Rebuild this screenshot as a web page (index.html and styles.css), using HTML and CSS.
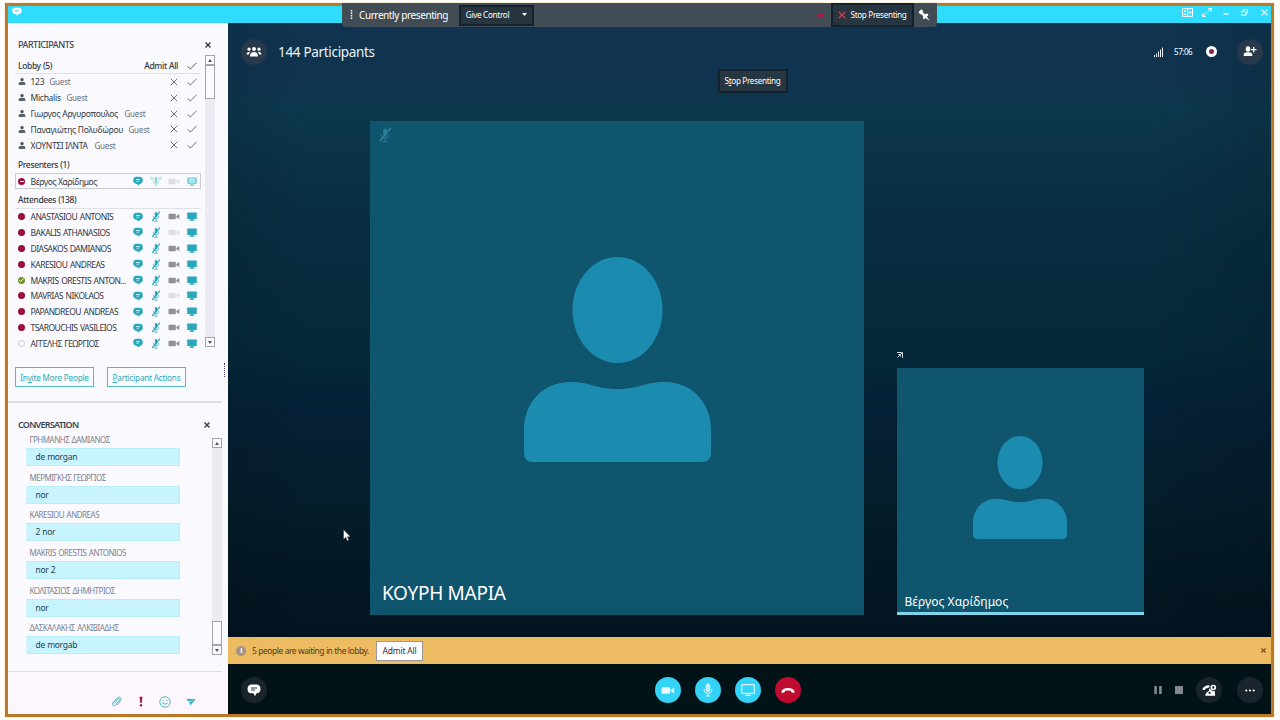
FILE: index.html
```html
<!DOCTYPE html>
<html lang="en">
<head>
<meta charset="utf-8">
<title>Meeting</title>
<link rel="stylesheet" href="styles.css">
</head>
<body>
<svg class="defs" width="0" height="0">
  <symbol id="person" viewBox="0 0 187 205"><ellipse cx="93.500" cy="53" rx="45" ry="53"/><path d="M0 172C0 148 17 125 47 125C66 125 72 132 93.500 132S121 125 140 125C170 125 187 148 187 172V196Q187 205 178 205H9Q0 205 0 196Z"/></symbol>
  <symbol id="user" viewBox="0 0 8 9"><ellipse cx="4" cy="2.600" rx="1.700" ry="1.900"/><path d="M.7 8V6.400Q.7 5 2.500 5H5.500Q7.300 5 7.300 6.400V8Z"/></symbol>
  <symbol id="x" viewBox="0 0 8 8"><path d="M.7.7L7.300 7.300M7.300.7L.7 7.300" fill="none" stroke="currentColor"/></symbol>
  <symbol id="check" viewBox="0 0 10 8"><path d="M.6 4.500L3.500 7L9.400.8" fill="none" stroke="currentColor"/></symbol>
  <symbol id="chat" viewBox="0 0 10 10"><path d="M3.500 .8H6.500Q9.800 1 9.800 4.300T6.800 7.900L5.600 9.500L4 7.900Q.2 7.500.2 4.300T3.500 .8Z" fill="currentColor"/><path d="M3 3.500H7M3.300 5.200H6" stroke="#d8f5f8" stroke-width=".8"/></symbol>
  <symbol id="mute" viewBox="0 0 10 11"><rect x="3.800" y=".9" width="2.400" height="5.600" rx="1.200" fill="currentColor"/><path d="M2.400 5V6Q2.700 7.800 5 7.800T7.600 6V5M5 8V10M3.200 10.200H6.800" fill="none" stroke="currentColor" stroke-width=".7"/><path d="M1.200 10L9 .6" stroke="currentColor" stroke-width="1.200"/></symbol>
  <symbol id="live" viewBox="0 0 12 11"><rect x="4.900" y="1" width="2.200" height="6" rx="1.100" fill="currentColor"/><path d="M3.500 5V6.500Q4 8 6 8T8.500 6.500V5M6 8V10.500M2.900 1V4M9.100 1V4M1 .8V3.700M11 .8V3.700" fill="none" stroke="currentColor" stroke-width=".8"/></symbol>
  <symbol id="cam" viewBox="0 0 12 7"><rect x=".5" y=".8" width="7.300" height="5.500" rx="1" fill="currentColor"/><path d="M8.300 3L11.300 1V6L8.300 4.200Z" fill="currentColor"/></symbol>
  <symbol id="screen" viewBox="0 0 10 9"><path d="M.2.5H9.800V7H6.500V8H7.500V8.700H2.500V8H3.500V7H.2Z" fill="currentColor"/></symbol>
</svg>

<div class="window">
  <header class="titlebar">
    <svg class="logo" width="10" height="10" viewBox="0 0 10 10"><path d="M2.500.8H7.500Q9.700 1 9.700 3.800T7.500 7H6.500L5 9L4.200 7H2.500Q.3 6.700.3 3.800T2.500.8Z" fill="#fff"/><path d="M3 3.300H7M3 4.700H6" stroke="#37d5ef" stroke-width=".7"/></svg>
    <div class="winctl">
      <svg width="11" height="9" viewBox="0 0 11 9" fill="none" stroke="#fff"><path d="M.5.6H10.500V8.400H.5ZM5.700.6V8.400M7 4.500H9.500M8.200 3V6"/><circle cx="3" cy="3.200" r=".7"/><path d="M1.600 6.300H4.500"/></svg>
      <svg width="10" height="9" viewBox="0 0 10 9" fill="none" stroke="#fff"><path d="M6 .6H9.400V3.700M9.200.8L5.700 4M4 8.400H.6V5.200M.8 8.200L4.300 5"/></svg>
      <svg width="6" height="9" viewBox="0 0 6 9"><path d="M.5 6H5.500" stroke="#fff" stroke-width="1.300"/></svg>
      <svg width="7" height="9" viewBox="0 0 7 9" fill="none" stroke="#fff"><path d="M2 3V1.500H6.500V5H5M.5 3.500H5V7.200H.5Z"/></svg>
      <svg width="7" height="7" viewBox="0 0 8 8" color="#fff" stroke-width="1.400"><use href="#x"/></svg>
    </div>
  </header>

  <div class="content">
    <aside class="sidebar">
      <section class="people">
        <div class="panel-head"><h2>PARTICIPANTS</h2><svg class="close" width="6" height="6" stroke-width="2"><use href="#x"/></svg></div>
        <div class="scroller">
          <div class="list">
            <div class="group lobby"><span>Lobby (5)</span><span class="admit">Admit All</span><svg width="10" height="8"><use href="#check"/></svg></div>
            <div class="guest"><svg class="u" width="8" height="9"><use href="#user"/></svg><span style="width:12px">123</span><i>Guest</i><svg class="no" width="8" height="8"><use href="#x"/></svg><svg class="ok" width="10" height="8"><use href="#check"/></svg></div>
            <div class="guest"><svg class="u" width="8" height="9"><use href="#user"/></svg><span style="width:29px">Michalis</span><i>Guest</i><svg class="no" width="8" height="8"><use href="#x"/></svg><svg class="ok" width="10" height="8"><use href="#check"/></svg></div>
            <div class="guest"><svg class="u" width="8" height="9"><use href="#user"/></svg><span style="width:87px">Γιωργος Αργυροπουλος</span><i>Guest</i><svg class="no" width="8" height="8"><use href="#x"/></svg><svg class="ok" width="10" height="8"><use href="#check"/></svg></div>
            <div class="guest"><svg class="u" width="8" height="9"><use href="#user"/></svg><span style="width:91px">Παναγιώτης Πολυδώρου</span><i>Guest</i><svg class="no" width="8" height="8"><use href="#x"/></svg><svg class="ok" width="10" height="8"><use href="#check"/></svg></div>
            <div class="guest"><svg class="u" width="8" height="9"><use href="#user"/></svg><span class="caps" style="width:57px">ΧΟΥΝΤΣΙ ΙΛΝΤΑ</span><i>Guest</i><svg class="no" width="8" height="8"><use href="#x"/></svg><svg class="ok" width="10" height="8"><use href="#check"/></svg></div>
            <div class="group presenters">Presenters (1)</div>
            <div class="row self"><b class="dot busy-line"></b><span class="name mixed">Βέργος Χαρίδημος</span><svg width="10" height="10"><use href="#chat"/></svg><svg class="pale" width="12" height="11"><use href="#live"/></svg><svg class="cam off" width="12" height="7"><use href="#cam"/></svg><svg class="pale" width="10" height="9"><use href="#screen"/><path d="M3 2.500H7V5H3Z" fill="none" stroke="#fff" stroke-width=".8"/></svg></div>
            <div class="group attendees">Attendees (138)</div>
            <div class="row"><b class="dot"></b><span class="name">ANASTASIOU ANTONIS</span><svg width="10" height="10"><use href="#chat"/></svg><svg width="12" height="11"><use href="#mute"/></svg><svg class="cam" width="12" height="7"><use href="#cam"/></svg><svg width="10" height="9"><use href="#screen"/></svg></div>
            <div class="row"><b class="dot"></b><span class="name">BAKALIS ATHANASIOS</span><svg width="10" height="10"><use href="#chat"/></svg><svg width="12" height="11"><use href="#mute"/></svg><svg class="cam off" width="12" height="7"><use href="#cam"/></svg><svg width="10" height="9"><use href="#screen"/></svg></div>
            <div class="row"><b class="dot"></b><span class="name">DIASAKOS DAMIANOS</span><svg width="10" height="10"><use href="#chat"/></svg><svg width="12" height="11"><use href="#mute"/></svg><svg class="cam" width="12" height="7"><use href="#cam"/></svg><svg width="10" height="9"><use href="#screen"/></svg></div>
            <div class="row"><b class="dot"></b><span class="name">KARESIOU ANDREAS</span><svg width="10" height="10"><use href="#chat"/></svg><svg width="12" height="11"><use href="#mute"/></svg><svg class="cam" width="12" height="7"><use href="#cam"/></svg><svg width="10" height="9"><use href="#screen"/></svg></div>
            <div class="row"><b class="dot free"><svg width="5" height="4" viewBox="0 0 10 8" stroke-width="2"><use href="#check"/></svg></b><span class="name">MAKRIS ORESTIS ANTON...</span><svg width="10" height="10"><use href="#chat"/></svg><svg width="12" height="11"><use href="#mute"/></svg><svg class="cam" width="12" height="7"><use href="#cam"/></svg><svg width="10" height="9"><use href="#screen"/></svg></div>
            <div class="row"><b class="dot"></b><span class="name">MAVRIAS NIKOLAOS</span><svg width="10" height="10"><use href="#chat"/></svg><svg width="12" height="11"><use href="#mute"/></svg><svg class="cam off" width="12" height="7"><use href="#cam"/></svg><svg width="10" height="9"><use href="#screen"/></svg></div>
            <div class="row"><b class="dot"></b><span class="name">PAPANDREOU ANDREAS</span><svg width="10" height="10"><use href="#chat"/></svg><svg width="12" height="11"><use href="#mute"/></svg><svg class="cam" width="12" height="7"><use href="#cam"/></svg><svg width="10" height="9"><use href="#screen"/></svg></div>
            <div class="row"><b class="dot"></b><span class="name">TSAROUCHIS VASILEIOS</span><svg width="10" height="10"><use href="#chat"/></svg><svg width="12" height="11"><use href="#mute"/></svg><svg class="cam" width="12" height="7"><use href="#cam"/></svg><svg width="10" height="9"><use href="#screen"/></svg></div>
            <div class="row"><b class="dot none"></b><span class="name">ΑΓΓΕΛΗΣ ΓΕΩΡΓΙΟΣ</span><svg width="10" height="10"><use href="#chat"/></svg><svg width="12" height="11"><use href="#mute"/></svg><svg class="cam" width="12" height="7"><use href="#cam"/></svg><svg width="10" height="9"><use href="#screen"/></svg></div>
          </div>
          <div class="scrollbar"><div class="sb up"></div><div class="thumb tall"></div><div class="sb down"></div></div>
        </div>
        <div class="actions"><button>In<u>v</u>ite More People</button><button><u>P</u>articipant Actions</button></div>
        <div class="grip"></div>
      </section>

      <section class="conversation">
        <div class="panel-head"><h2 class="strong">CONVERSATION</h2><svg class="close" width="6" height="6" stroke-width="2"><use href="#x"/></svg></div>
        <div class="chat-body">
          <div class="messages">
            <div class="msg"><h3>ΓΡΗΜΑΝΗΣ ΔΑΜΙΑΝΟΣ</h3><p>de morgan</p></div>
            <div class="msg"><h3>ΜΕΡΜΙΓΚΗΣ ΓΕΩΡΓΙΟΣ</h3><p>nor</p></div>
            <div class="msg"><h3>KARESIOU ANDREAS</h3><p>2 nor</p></div>
            <div class="msg"><h3>MAKRIS ORESTIS ANTONIOS</h3><p>nor 2</p></div>
            <div class="msg"><h3>ΚΟΛΙΤΑΣΙΟΣ ΔΗΜΗΤΡΙΟΣ</h3><p>nor</p></div>
            <div class="msg"><h3>ΔΑΣΚΑΛΑΚΗΣ ΑΛΚΙΒΙΑΔΗΣ</h3><p>de morgab</p></div>
          </div>
          <div class="scrollbar"><div class="sb up"></div><div class="track"></div><div class="thumb"></div><div class="sb down"></div></div>
        </div>
      </section>

      <div class="compose">
        <svg width="11" height="12" viewBox="0 0 11 12" fill="none" stroke="#4fb9c6"><path d="M3 7.500L6.800 3.200Q7.800 2.400 8.300 3T8.300 4.700L4.300 9.200Q3 10.300 2 9.500T1.800 7L6 2.200Q7.800.3 9.300 1.500T9.500 4.800L6 9"/></svg>
        <svg width="4" height="11" viewBox="0 0 4 11" fill="#a01845"><path d="M.5.800H3.500L2.700 7H1.300Z"/><circle cx="2" cy="9.200" r="1.200"/></svg>
        <svg width="12" height="12" viewBox="0 0 12 12" fill="none" stroke="#4fb9c6"><circle cx="6" cy="6" r="5.200"/><path d="M4.200 4V5.200M7.800 4V5.200M3.300 6.800Q6 9.800 8.700 6.800"/></svg>
        <svg width="10" height="8" viewBox="0 0 10 8" fill="#37b3c2"><path d="M.2.800L9.800 1.200L4.200 7.500L3.300 4.600L7.500 2L2.500 3.800Z"/></svg>
      </div>
    </aside>

    <main class="main">
      <div class="stage">
        <div class="stage-head">
          <span class="round"><svg width="16" height="12" viewBox="0 0 16 12" fill="#fff"><circle cx="8" cy="3" r="2"/><circle cx="3" cy="3.200" r="1.600"/><circle cx="13" cy="3.200" r="1.600"/><path d="M4 10.500Q4 6 8 6T12 10.500ZM.5 8.500Q.5 5.500 4.500 5.700Q3 7 3 8.500ZM15.500 8.500Q15.500 5.500 11.500 5.700Q13 7 13 8.500Z"/></svg></span>
          <h1>144 Participants</h1>
          <svg class="signal" width="10" height="10" viewBox="0 0 10 10" fill="#e6eef2"><path d="M0 8H1V10H0ZM2 6.500H3V10H2ZM4 4.500H5V10H4ZM6 2.500H7V10H6ZM8 .5H9V10H8Z"/></svg>
          <span class="time">57:06</span>
          <span class="rec"></span>
          <span class="round"><svg width="14" height="11" viewBox="0 0 14 11" fill="#fff"><ellipse cx="5" cy="3" rx="2.300" ry="2.800"/><path d="M.7 10V8.500Q1 6.300 4 6.300H6Q9 6.300 9.300 8.500V10ZM10 1H11.300V3H13.500V4.300H11.300V6.500H10V4.300H8V3H10Z"/></svg></span>
        </div>
        <div class="stop-row"><button class="dark">S<u>t</u>op Presenting</button></div>
        <div class="tiles">
          <div class="tile big"><svg class="muted" width="14" height="16" viewBox="0 0 10 11"><use href="#mute"/></svg><svg class="avatar" width="187" height="205"><use href="#person"/></svg><span>ΚΟΥΡΗ ΜΑΡΙΑ</span></div>
          <div class="side">
            <svg class="pop" width="6" height="6" viewBox="0 0 6 6" fill="none" stroke="#c8d8dc"><path d="M0 .5H5.500V6M5 1L.5 5.500M1.500 2.500H3.500V4.500"/></svg>
            <div class="tile small"><svg class="avatar" width="94" height="103" viewBox="0 0 187 205"><use href="#person"/></svg><span>Βέργος Χαρίδημος</span></div>
          </div>
        </div>
      </div>
      <div class="notice"><b class="info">i</b><span>5 people are waiting in the lobby.</span><button>Admit All</button><svg class="nclose" width="5" height="5" viewBox="0 0 8 8" stroke-width="2"><use href="#x"/></svg></div>
      <footer class="controls">
        <div class="left"><span class="round"><svg width="14" height="13" viewBox="0 0 14 13"><path d="M4 .5H10Q13.500 1 13.500 5T10 9.300H9.500L8 12.300L6.500 9.300H4Q.5 9 .5 5T4 .5Z" fill="#fff"/><path d="M4 4H10M4 6H8" stroke="#26333d"/></svg></span></div>
        <div class="calls">
          <span class="ball"><svg width="14" height="9" viewBox="0 0 12 7" color="#e9fbff"><use href="#cam"/></svg></span>
          <span class="ball"><svg width="10" height="14" viewBox="0 0 10 14" fill="none" stroke="#e9fbff"><rect x="3.300" y="1" width="3.400" height="7.500" rx="1.700" fill="#b5eefa"/><path d="M1.300 6V7.500Q1.700 10.500 5 10.500T8.700 7.500V6M5 10.500V13M2.800 13H7.200"/></svg></span>
          <span class="ball"><svg width="14" height="12" viewBox="0 0 14 12" fill="none" stroke="#d9f9ff" stroke-width="1.200"><rect x=".7" y=".7" width="12.600" height="8.600" rx=".6"/><path d="M4 11.300H10M7 9.500V11"/></svg></span>
          <span class="ball hang"><svg width="14" height="7" viewBox="0 0 14 7" fill="#fff"><path d="M.5 4.300Q2 1 7 1T13.500 4.300Q13.700 6 12.700 5.900L10.500 5.200Q10 4.800 9.800 3.800Q7 3 4.200 3.800Q4 4.800 3.500 5.200L1.300 5.900Q.3 6 .5 4.300Z"/></svg></span>
        </div>
        <div class="right">
          <svg width="8" height="8" viewBox="0 0 8 8" fill="#84898f"><path d="M.3 0H2.900V8H.3ZM5.100 0H7.700V8H5.100Z"/></svg>
          <span class="stop"></span>
          <span class="round"><svg width="15" height="13" viewBox="0 0 15 13"><path d="M.6 4.800Q2.500 1 7.300 1.200L7.600 3L5.500 4.300L4 4.300L2.700 5.900L.8 5.900ZM7 4.800L8.500 5Q9 7.200 12.800 7.200L13.200 11.700H3.300Q3 9 7 7Z" fill="#fff"/><circle cx="11.300" cy="3.500" r="2" fill="none" stroke="#fff" stroke-width="1.600"/><circle cx="7.600" cy="8.900" r="1.100" fill="#1b252d"/></svg></span>
          <span class="round"><svg width="10" height="3" viewBox="0 0 10 3" fill="#fff"><circle cx="1.300" cy="1.500" r="1.100"/><circle cx="5" cy="1.500" r="1.100"/><circle cx="8.700" cy="1.500" r="1.100"/></svg></span>
        </div>
      </footer>
    </main>
  </div>
</div>

<div class="share">
  <svg width="3" height="10" viewBox="0 0 3 10"><path d="M1.500 0V10" stroke="#fff" stroke-width="1.500" stroke-dasharray="1.500 1"/></svg>
  <span class="status">Currently presenting</span>
  <button class="dark give">Give Control<svg width="5" height="3" viewBox="0 0 5 3"><path d="M0 0H5L2.500 3Z" fill="#fff"/></svg></button>
  <span class="reddot"></span>
  <button class="dark end"><svg width="8" height="8" viewBox="0 0 8 8" color="#d83a49" stroke-width="1.300"><use href="#x"/></svg>Stop Presenting</button>
  <svg class="pin" width="12" height="12" viewBox="0 0 11 11"><path d="M.5 2.800L3 .3L4.700 1.800L4.400 3L6.500 4.800L8.800 4.200L9.500 5.700L8.200 7L10.700 10.700L7 8.200L5.800 9.500L4.500 8.700L4.800 6.700L3.100 4.800L2 4.900Z" fill="#fff"/></svg>
</div>
<svg class="cursor" width="8" height="13" viewBox="0 0 8 13"><path d="M.6.800V10.300L2.800 8.300L4.300 11.800L5.800 11.100L4.400 7.800H7.400Z" fill="#fff" stroke="#334" stroke-width=".4"/></svg>
</body>
</html>
```

FILE: styles.css
```css
* { box-sizing: border-box; }
body { margin: 0; width: 1280px; height: 720px; overflow: hidden; position: relative; background: #fffefa; padding: 3px 0 0 5px; font-family: "Noto Sans", "Open Sans", sans-serif; color: #333a43; }
h1, h2, h3, p { margin: 0; font-weight: 400; }
button { font: inherit; margin: 0; padding: 0; display: flex; align-items: center; justify-content: center; white-space: pre; }
svg { display: block; flex: none; }
.defs { position: absolute; }
u { text-underline-offset: 1px; text-decoration-thickness: 1px; }

.window { width: 1269px; height: 714px; border: 3px solid #bb7a29; box-shadow: 0 0 1px #e6a55a; display: flex; flex-direction: column; }
.titlebar { height: 17px; background: #2fdcfd; display: flex; justify-content: space-between; padding: 1px 3px 0 4px; align-items: flex-start; }
.winctl { display: flex; align-items: center; padding-top: 1px; }
.winctl svg:nth-child(1) { margin-right: 9px; }
.winctl svg:nth-child(2) { margin-right: 11px; }
.winctl svg:nth-child(3) { margin-right: 12px; }
.winctl svg:nth-child(4) { margin-right: 13px; }
.content { display: flex; flex: 1; min-height: 0; }

.sidebar { width: 220px; background: #f9f9fe; display: flex; flex-direction: column; white-space: nowrap; }
.people { height: 380px; border-bottom: 2px solid #dcdee0; margin-right: 6px; position: relative; }
.panel-head { display: flex; justify-content: space-between; align-items: center; }
.people .panel-head { height: 32px; padding: 11px 11px 0 10px; }
h2 { font-size: 9px; letter-spacing: -.5px; line-height: 12px; color: #3f4650; font-weight: 500; }
h2.strong { font-weight: 600; letter-spacing: -.75px; }
.close { color: #3d434b; }
.scroller { display: flex; height: 293px; }
.list { width: 197px; padding-left: 7px; font-size: 8.500px; letter-spacing: -.28px; }
.group { line-height: 14px; padding-left: 3px; font-weight: 500; letter-spacing: -.37px; word-spacing: .3px; }
.lobby { height: 19px; padding-top: 3px; border-bottom: 1px solid #dfe1e6; display: flex; align-items: center; margin-right: 4px; padding-right: 4px; }
.lobby .admit { margin-left: auto; margin-right: 9px; }
.lobby svg { color: #555c64; }
.guest, .row { height: 15.850px; display: flex; align-items: center; }
.guest { padding-right: 8px; color: #6a7078; }
.guest .u { margin-left: 3px; margin-right: 4.500px; fill: #59616a; }
.guest span { color: #333a43; }
.guest .caps { letter-spacing: -.35px; }
.guest i { font-style: normal; font-size: 8px; margin-left: 7px; color: #6a7078; letter-spacing: -.2px; }
.guest .no { margin-left: auto; margin-right: 9px; }
.presenters { height: 20px; padding-top: 5px; }
.row { padding-left: 3px; color: #27a9bb; }
.self { border: 1px solid #c9cbd3; padding-left: 2px; margin-bottom: 2px; margin-right: 4px; height: 16px; width: 186px; }
.attendees { height: 17.500px; padding-top: 2px; border-bottom: 1px solid #dfe1e6; margin-right: 4px; }
.name { width: 99.500px; margin-left: 5.500px; color: #333a43; letter-spacing: -.53px; word-spacing: .9px; }
.name.mixed { letter-spacing: -.4px; word-spacing: 0; }
.row .name { margin-right: 3px; }
.dot { width: 7px; height: 7px; border-radius: 50%; background: #9b0d3a; display: flex; align-items: center; justify-content: center; color: #fff; flex: none; }
.busy-line::after { content: ""; width: 4px; height: 1px; background: #fff; }
.free { background: #6f9522; }
.none { background: none; border: 1px solid #c5cad0; }
.row svg + svg { margin-left: 7px; }
.row .cam { color: #8d9197; margin-left: 6px; }
.row .cam.off { color: #dddfe5; }
.row .cam + svg { margin-left: 7px; }
.row .pale { color: #7ed3de; }

.scrollbar { width: 10px; background: #ecebf3; display: flex; flex-direction: column; }
.sb { height: 10px; border: 1px solid #a3a4aa; background: #fbfbfe; display: flex; align-items: center; justify-content: center; flex: none; }
.sb::after { content: ""; border: 2.500px solid transparent; }
.up::after { border-top: 0; border-bottom: 3px solid #555; }
.down::after { border-bottom: 0; border-top: 3px solid #555; }
.thumb { height: 24px; background: #fbfbfe; border: 1px solid #a3a4aa; }
.tall { height: 34px; margin-bottom: auto; }
.people .scrollbar { height: 292px; }
.track { flex: 1; }
.actions { display: flex; gap: 13px; padding: 19px 0 0 7px; }
.actions button { width: 79px; height: 20px; background: #fbfcff; border: 1px solid #56bcc4; color: #2ba7b5; font-size: 8.200px; letter-spacing: -.22px; }
.grip { position: absolute; right: -3px; top: 340px; height: 14px; border-right: 1px dotted #4a3c6a; }

.conversation { height: 269px; margin-right: 6px; border-bottom: 1px solid #e0dde6; }
.conversation .panel-head { height: 30px; padding: 14px 12px 0 10px; }
.chat-body { display: flex; justify-content: space-between; }
.messages { width: 154px; margin-left: 17.500px; }
.msg { height: 37.700px; padding-top: 2px; }
h3 { font-size: 8px; line-height: 10px; margin: 0 0 3px 4px; height: 10px; color: #7f848e; letter-spacing: -.5px; word-spacing: .8px; }
.msg p { height: 18px; line-height: 16px; padding-left: 9px; font-size: 8.500px; letter-spacing: -.3px; word-spacing: .3px; background: #c7f4ff; color: #24424e; border: 1px solid #b9edf6; border-left-color: #d6f6fc; border-radius: 1px; }
.conversation .scrollbar { height: 217px; margin-top: 5px; }
.compose { flex: 1; background: #fdf6fd; display: flex; align-items: center; padding: 17px 0 0 103px; }
.compose svg:nth-child(1) { margin-right: 17px; }
.compose svg:nth-child(2) { margin-right: 16px; }
.compose svg:nth-child(3) { margin-right: 15px; }

.main { flex: 1; display: flex; flex-direction: column; min-width: 0; }
.stage { height: 614px; background: linear-gradient(90deg, rgba(0,8,16,.1), transparent 8%, transparent 88%, rgba(0,8,16,.12)), linear-gradient(#10344f 0, #10344f 55px, #0b384b 90px, #0b3347 130px, #082c40 220px, #06293a 320px, #042036 390px, #041d29 490px, #021520 580px, #011420 614px); color: #fff; }
.stage-head { height: 47px; padding: 10px 8px 0 12.500px; display: flex; align-items: center; }
.round { width: 26px; height: 26px; border-radius: 50%; background: #27394b; display: flex; align-items: center; justify-content: center; flex: none; }
h1 { font-size: 13.500px; letter-spacing: -.32px; margin-left: 11.500px; color: #eaf3f8; }
.signal { margin-left: auto; }
.time { font-size: 8px; letter-spacing: -.45px; margin-left: 10px; width: 19px; }
.rec { width: 11px; height: 11px; border-radius: 50%; border: 3px solid #fff; background: #8b2251; margin: 0 20px 0 13px; }
.stop-row { display: flex; padding-left: 489.500px; height: 51px; }
.dark { background: #273742; border: 2px solid #14222e; color: #fff; font-size: 8.200px; letter-spacing: -.34px; padding-bottom: 1px; }
.stop-row .dark { width: 70px; height: 24px; margin-top: -1px; }
.tiles { display: flex; align-items: flex-end; padding-left: 142px; }
.tile { background: #10556e; position: relative; display: flex; justify-content: center; }
.tile > span { position: absolute; }
.avatar { fill: #1b8bb0; }
.big { width: 494px; height: 494px; padding-top: 136px; }
.big > span { left: 12px; bottom: 9px; font-size: 19px; line-height: 26px; letter-spacing: -.28px; }
.muted { position: absolute; left: 8px; top: 6px; color: #2b7f97; }
.side { margin-left: 32.500px; }
.pop { margin: 0 0 10px 0; }
.small { width: 247px; height: 247px; padding-top: 67.500px; border-bottom: 3px solid #80d5ec; }
.small > span { left: 8px; bottom: 1px; font-size: 12px; line-height: 18px; letter-spacing: .05px; white-space: nowrap; }

.notice { height: 27px; background: #ecbb62; display: flex; align-items: center; padding: 0 5px 0 8px; color: #51401f; font-size: 8.500px; letter-spacing: -.47px; word-spacing: .1px; white-space: nowrap; }
.info { width: 10px; height: 10px; border-radius: 50%; background: #a7937f; color: #fff; font-size: 7px; line-height: 10px; text-align: center; }
.notice span { width: 118px; margin: 0 6px; }
.notice button { width: 47px; height: 20px; background: #fffcff; border: 1px solid #999; color: #333; letter-spacing: -.2px; }
.nclose { margin-left: auto; color: #8e4b27; }
.controls { height: 50px; background: #021318; display: grid; grid-template-columns: 1fr 1fr 1fr; align-items: center; padding: 2px 8.500px 0 12px; }
.controls .round { background: #19242c; }
.left { display: flex; margin-left: 1px; }
.calls { display: flex; gap: 14px; justify-content: center; margin-left: -46px; }
.ball { width: 26px; height: 26px; border-radius: 50%; background: #32d3f6; display: flex; align-items: center; justify-content: center; }
.hang { background: #c10a2f; }
.right { display: flex; justify-content: flex-end; align-items: center; }
.right .stop { width: 8px; height: 8px; background: #84898f; margin: 0 13px; }
.right .round + .round { margin-left: 14.500px; }

.share { position: absolute; left: 342px; top: 3px; width: 595px; height: 24px; background: #414c54; border-radius: 0 0 4px 4px; display: flex; align-items: center; color: #fff; padding-left: 8px; }
.status { font-size: 10px; letter-spacing: -.42px; word-spacing: .3px; width: 100px; margin-left: 6px; white-space: nowrap; }
.share .dark { height: 21px; background: #263540; }
.share .give { width: 75px; gap: 13px; }
.reddot { width: 5px; height: 4px; background: #a51d4c; border-radius: 1px; margin-left: 284px; }
.share .dark.end { width: 83px; height: 24px; margin-left: 8px; gap: 4px; }
.pin { margin-left: 4px; }
.cursor { position: absolute; left: 343px; top: 529px; }
```
